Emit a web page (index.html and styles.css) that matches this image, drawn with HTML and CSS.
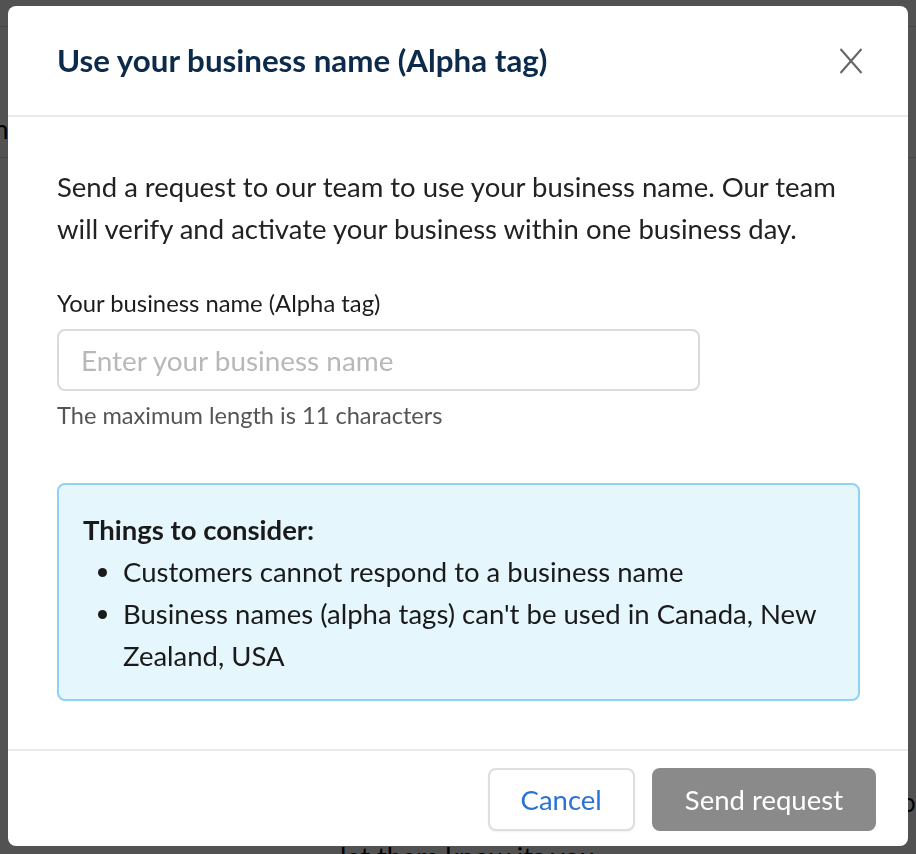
FILE: index.html
```html
<!DOCTYPE html>
<html lang="en">
<head>
<meta charset="utf-8">
<title>Use your business name</title>
<link rel="stylesheet" href="styles.css">
</head>
<body>
<div class="page">
  <div class="page-top"></div>
  <div class="page-section">
    <span class="page-cut">n</span>
  </div>
  <div class="page-rest">
    <p class="page-side">o</p>
    <p class="page-note">let them know its you</p>
  </div>
</div>

<div class="overlay">
  <div class="modal" role="dialog" aria-labelledby="modal-title">
    <header class="modal-header">
      <h2 id="modal-title" class="modal-title">Use your business name (Alpha tag)</h2>
      <button class="close-btn" aria-label="Close">
        <svg width="24" height="26" viewBox="0 0 24 26" fill="none" stroke="#666" stroke-width="2" stroke-linecap="butt">
          <line x1="1.5" y1="1" x2="22.5" y2="25"/>
          <line x1="22.5" y1="1" x2="1.5" y2="25"/>
        </svg>
      </button>
    </header>
    <div class="modal-body">
      <p class="intro">Send a request to our team to use your business name. Our team will verify and activate your business within one business day.</p>
      <label class="field-label" for="bizname">Your business name (Alpha tag)</label>
      <input id="bizname" class="field-input" type="text" placeholder="Enter your business name">
      <p class="field-help">The maximum length is 11 characters</p>
      <div class="info-box">
        <p class="info-title">Things to consider:</p>
        <ul class="info-list">
          <li>Customers cannot respond to a business name</li>
          <li>Business names (alpha tags) can't be used in Canada, New Zealand, USA</li>
        </ul>
      </div>
    </div>
    <footer class="modal-footer">
      <button class="btn btn-secondary">Cancel</button>
      <button class="btn btn-primary">Send request</button>
    </footer>
  </div>
</div>
</body>
</html>
```

FILE: styles.css
```css
* { box-sizing: border-box; }

html, body {
  margin: 0;
  padding: 0;
}

body {
  font-family: Lato, "Open Sans", "Liberation Sans", sans-serif;
  background: #ffffff;
  color: #1a1a1a;
  width: 916px;
  height: 854px;
  overflow: hidden;
}

/* background page (behind overlay) */
.page {
  height: 854px;
  display: flex;
  flex-direction: column;
}
.page-top {
  height: 27px;
  border-bottom: 1px solid #dcdcdc;
}
.page-section {
  height: 131px;
  border-bottom: 1px solid #dcdcdc;
  padding-top: 85px;
  font-size: 26px;
  line-height: 34px;
}
.page-cut {
  display: inline-block;
  margin-left: -6px;
  color: #000;
}
.page-rest {
  flex: 1;
  display: flex;
  flex-direction: column;
  justify-content: flex-end;
}
.page-side {
  margin: 0 -1px 26px auto;
  width: 16px;
  font-size: 26px;
  line-height: 28px;
  color: #000;
}
.page-note {
  margin: 0 0 -18px 340px;
  font-size: 27px;
  line-height: 30px;
  color: #000;
}

/* overlay + modal */
.overlay {
  position: fixed;
  inset: 0;
  background: rgba(0, 0, 0, 0.68);
}

.modal {
  position: absolute;
  left: 8px;
  top: 6px;
  width: 900px;
  height: 840px;
  background: #ffffff;
  border-radius: 8px;
  display: flex;
  flex-direction: column;
  overflow: hidden;
}

.modal-header {
  height: 111px;
  padding: 0 45px 2px 49px;
  display: flex;
  align-items: center;
  justify-content: space-between;
  border-bottom: 2px solid #ebebeb;
}

.modal-title {
  margin: 0;
  font-size: 31.3px;
  font-weight: 700;
  color: #0c2a4b;
}

.close-btn {
  border: 0;
  background: none;
  padding: 0;
  width: 24px;
  height: 26px;
  margin-top: 2px;
  cursor: pointer;
  display: flex;
}

.modal-body {
  padding: 49px 48px 48px 49px;
  border-bottom: 2px solid #ebebeb;
}

.intro {
  margin: 0;
  font-size: 27.5px;
  line-height: 42px;
  color: #222222;
}

.field-label {
  display: block;
  margin-top: 39px;
  font-size: 23.8px;
  line-height: 28px;
  color: #1c1c1c;
}

.field-input {
  display: block;
  margin-top: 12px;
  width: 643px;
  height: 62px;
  border: 2px solid #dadada;
  border-radius: 8px;
  padding: 0 22px;
  font-family: inherit;
  font-size: 27.9px;
  color: #222;
  outline: none;
}
.field-input::placeholder {
  color: #b8b8b8;
}

.field-help {
  margin: 10px 0 0;
  font-size: 23.6px;
  line-height: 28px;
  color: #555555;
}

.info-box {
  margin-top: 54px;
  background: #e5f6fd;
  border: 2px solid #8fd2f4;
  border-radius: 8px;
  padding: 24px 24px 22px;
  font-size: 27.5px;
  line-height: 42px;
  color: #1a1a1a;
}

.info-title {
  margin: 0;
  font-weight: 700;
}

.info-list {
  margin: 0;
  padding-left: 40px;
}

.modal-footer {
  padding: 17px 32px 13px;
  display: flex;
  justify-content: flex-end;
  gap: 17px;
}

.btn {
  height: 63px;
  border-radius: 8px;
  font-family: inherit;
  font-size: 27.5px;
  cursor: pointer;
}

.btn-secondary {
  background: #ffffff;
  border: 2px solid #dedede;
  color: #2a73d5;
  padding: 0 31px;
  box-shadow: 0 1px 2px rgba(0,0,0,0.06);
}

.btn-primary {
  background: #8a8a8b;
  border: 0;
  color: #ffffff;
  padding: 0 33px;
}
```
